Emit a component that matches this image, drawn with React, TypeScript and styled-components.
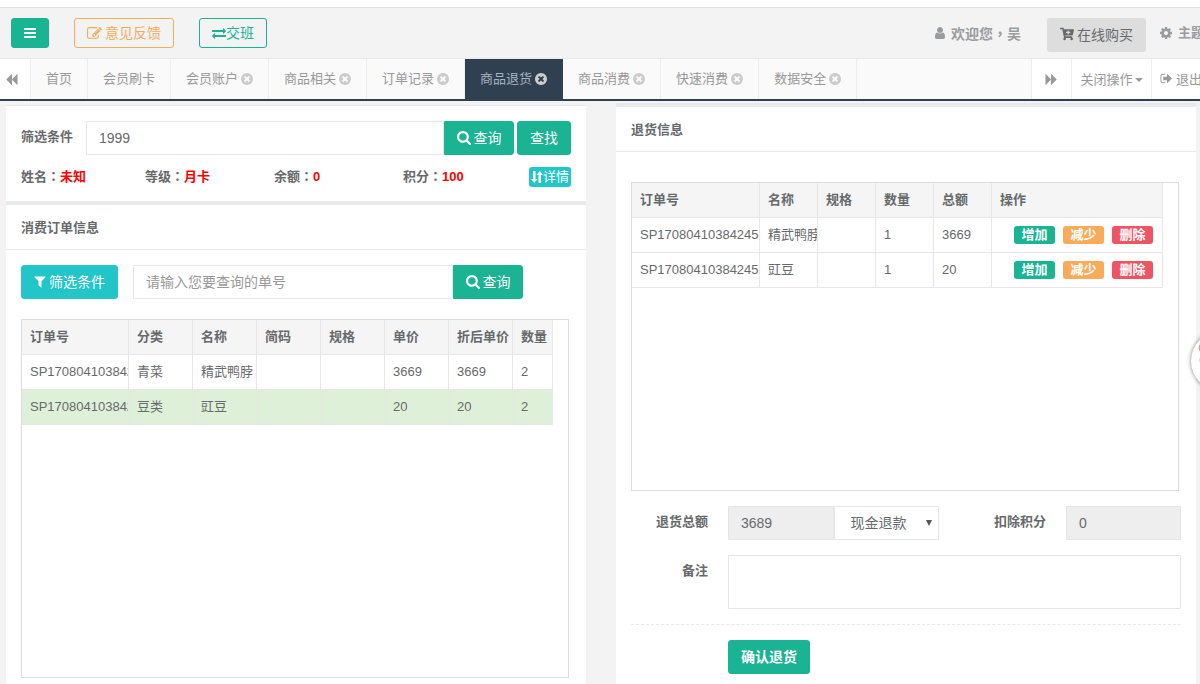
import React from "react";
import styled, { createGlobalStyle, css } from "styled-components";
import { FaCartPlus } from "react-icons/fa";

const GlobalStyle = createGlobalStyle`
  *, *::before, *::after { box-sizing: border-box; }
  body {
    margin: 0;
    background: #f3f3f4;
    color: #676a6c;
    font-family: "Liberation Sans", "Noto Sans CJK SC", sans-serif;
    font-size: 13px;
    line-height: 20px;
  }
  button, input, select, textarea { font-family: inherit; color: inherit; margin: 0; }
  a { color: inherit; text-decoration: none; }
`;

const paths = {
  bars: "M1664 1344v128q0 26-19 45t-45 19h-1408q-26 0-45-19t-19-45v-128q0-26 19-45t45-19h1408q26 0 45 19t19 45zm0-512v128q0 26-19 45t-45 19h-1408q-26 0-45-19t-19-45v-128q0-26 19-45t45-19h1408q26 0 45 19t19 45zm0-512v128q0 26-19 45t-45 19h-1408q-26 0-45-19t-19-45v-128q0-26 19-45t45-19h1408q26 0 45 19t19 45z",
  exchange: "M1792 1184v192q0 13-9.5 22.5t-22.5 9.5h-1376v192q0 13-9.5 22.5t-22.5 9.5q-12 0-24-10l-319-320q-9-9-9-22 0-14 9-23l320-320q9-9 23-9 13 0 22.5 9.5t9.5 22.5v192h1376q13 0 22.5 9.5t9.5 22.5zm0-544q0 14-9 23l-320 320q-9 9-23 9-13 0-22.5-9.5t-9.5-22.5v-192h-1376q-13 0-22.5-9.5t-9.5-22.5v-192q0-13 9.5-22.5t22.5-9.5h1376v-192q0-14 9-23t23-9q12 0 24 10l319 319q9 9 9 23z",
  edit: "M888 1184l116-116-152-152-116 116v56h96v96h56zm440-720q-16-16-33 1l-350 350q-17 17-1 33t33-1l350-350q17-17 1-33zm80 594v190q0 119-84.5 203.5t-203.5 84.5h-832q-119 0-203.5-84.5t-84.5-203.5v-832q0-119 84.5-203.5t203.5-84.5h832q63 0 117 25 15 7 18 23 3 17-9 29l-49 49q-14 14-32 8-23-6-45-6h-832q-66 0-113 47t-47 113v832q0 66 47 113t113 47h832q66 0 113-47t47-113v-126q0-13 9-22l64-64q15-15 35-7t20 29zm-96-738l288 288-672 672h-288v-288zm444 132l-92 92-288-288 92-92q28-28 68-28t68 28l152 152q28 28 28 68t-28 68z",
  search: "M1216 832q0-185-131.5-316.5t-316.5-131.5-316.5 131.5-131.5 316.5 131.5 316.5 316.5 131.5 316.5-131.5 131.5-316.5zm512 832q0 52-38 90t-90 38q-54 0-90-38l-343-342q-179 124-399 124-143 0-273.5-55.5t-225-150-150-225-55.5-273.5 55.5-273.5 150-225 225-150 273.5-55.5 273.5 55.5 225 150 150 225 55.5 273.5q0 220-124 399l343 343q37 37 37 90z",
  close: "M1277 1122q0-26-19-45l-181-181 181-181q19-19 19-45 0-27-19-46l-90-90q-19-19-46-19-26 0-45 19l-181 181-181-181q-19-19-45-19-27 0-46 19l-90 90q-19 19-19 46 0 26 19 45l181 181-181 181q-19 19-19 45 0 27 19 46l90 90q19 19 46 19 26 0 45-19l181-181 181 181q19 19 45 19 27 0 46-19l90-90q19-19 19-46zm387-226q0 209-103 385.5t-279.5 279.5-385.5 103-385.5-103-279.5-279.5-103-385.5 103-385.5 279.5-279.5 385.5-103 385.5 103 279.5 279.5 103 385.5z",
  filter: "M1595 295q17 41-14 70l-493 493v742q0 42-39 59-13 5-25 5-27 0-45-19l-256-256q-19-19-19-45v-486l-493-493q-31-29-14-70 17-39 59-39h1280q42 0 59 39z",
  forward: "M45 1651q-19 19-32 13t-13-32v-1472q0-26 13-32t32 13l710 710q8 8 13 19v-710q0-26 13-32t32 13l710 710q19 19 19 45t-19 45l-710 710q-19 19-32 13t-13-32v-710q-5 10-13 19z",
  signOut: "M704 1440q0 4 1 20t.5 26.5-3 23.5-10 19.5-20.5 6.5h-320q-119 0-203.5-84.5t-84.5-203.5v-704q0-119 84.5-203.5t203.5-84.5h320q13 0 22.5 9.5t9.5 22.5q0 4 1 20t.5 26.5-3 23.5-10 19.5-20.5 6.5h-320q-66 0-113 47t-47 113v704q0 66 47 113t113 47h312l11.500 1 11.500 3 8 5.500 7 9 2 13.500zm928-544q0 26-19 45l-544 544q-19 19-45 19t-45-19-19-45v-288h-448q-26 0-45-19t-19-45v-384q0-26 19-45t45-19h448v-288q0-26 19-45t45-19 45 19l544 544q19 19 19 45z",
  user: "M1536 1399q0 109-62.5 187t-150.5 78h-854q-88 0-150.5-78t-62.5-187q0-85 8.5-160.5t31.5-152 58.5-131 94-89 134.5-34.5q131 128 313 128t313-128q76 0 134.5 34.5t94 89 58.5 131 31.5 152 8.5 160.5zm-256-887q0 159-112.5 271.5t-271.5 112.5-271.5-112.5-112.5-271.5 112.5-271.5 271.5-112.5 271.5 112.5 112.5 271.5z",
  cog: "M1152 896q0-106-75-181t-181-75-181 75-75 181 75 181 181 75 181-75 75-181zm512-109v222q0 12-8 23t-20 13l-185 28q-19 54-39 91 35 50 107 138 10 12 10 25t-9 23q-27 37-99 108t-94 71q-12 0-26-9l-138-108q-44 23-91 38-16 136-29 186-7 28-36 28h-222q-14 0-24.5-8.5t-11.5-21.5l-28-184q-49-16-90-37l-141 107q-10 9-25 9-14 0-25-11-126-114-165-168-7-10-7-23 0-12 8-23 15-21 51-66.5t54-70.5q-27-50-41-99l-183-27q-13-2-21-12.5t-8-23.5v-222q0-12 8-23t19-13l186-28q14-46 39-92-40-57-107-138-10-12-10-24 0-10 9-23 26-36 98.5-107.5t94.5-71.5q13 0 26 10l138 107q44-23 91-38 16-136 29-186 7-28 36-28h222q14 0 24.5 8.5t11.5 21.5l28 184q49 16 90 37l142-107q9-9 24-9 13 0 25 10 129 119 165 170 7 8 7 22 0 12-8 23-15 21-51 66.5t-54 70.5q26 50 41 98l183 28q13 2 21 12.5t8 23.5z",
};

const Svg = styled.svg<{ $turn?: number }>`
  display: block;
  flex: none;
  fill: currentColor;
  ${(p) => p.$turn && css`transform: rotate(${p.$turn}deg);`}
`;

type IconProps = { name: keyof typeof paths; size?: number; turn?: number; box?: string };
const Icon = ({ name, size = 14, turn, box = "0 0 1792 1792" }: IconProps) => (
  <Svg viewBox={box} width={size} height={size} $turn={turn} aria-hidden="true">
    <path d={paths[name]} />
  </Svg>
);

const colors = { primary: "#1ab394", info: "#23c6c8", warning: "#f8ac59", danger: "#ed5565", line: "#e7e7e7" };
type Tone = "primary" | "info" | "warning" | "danger";

const Header = styled.header`
  display: flex;
  justify-content: space-between;
  align-items: flex-start;
  height: 52px;
  margin-top: 7px;
  padding: 10px 0 0 11px;
  border-top: 1px solid #dfe0e1;
  border-bottom: 1px solid #e7e7e7;
  white-space: nowrap;
`;

const TopStrip = styled.div`
  display: flow-root;
  background: linear-gradient(#fff 7px, #f3f3f4 7px);
  overflow: hidden;
`;

const HeaderGroup = styled.div<{ $gap: number }>`
  display: flex;
  align-items: flex-start;
  gap: ${(p) => p.$gap}px;
`;

const Button = styled.button<{ $tone: Tone; $outline?: boolean; $joined?: boolean; $height?: number; $bold?: boolean }>`
  display: inline-flex;
  flex: none;
  align-items: center;
  justify-content: center;
  gap: 3px;
  height: ${(p) => p.$height ?? 34}px;
  padding: 0 12px;
  border: 1px solid ${(p) => colors[p.$tone]};
  border-radius: ${(p) => (p.$joined ? "0 3px 3px 0" : "3px")};
  background: ${(p) => (p.$outline ? "transparent" : colors[p.$tone])};
  color: ${(p) => (p.$outline ? colors[p.$tone] : "#fff")};
  font-size: 14px;
  font-weight: ${(p) => (p.$bold ? 700 : 400)};
  line-height: 20px;
  white-space: nowrap;
`;

const SearchButton = styled(Button)`
  width: 70px;
  padding: 0;
`;

const ExchangeButton = styled(Button)`
  gap: 0;
`;

const Welcome = styled.span`
  display: flex;
  align-items: center;
  gap: 4px;
  height: 30px;
  color: #999c9e;
  font-size: 14px;
  font-weight: 700;
`;

const BuyButton = styled.button`
  display: flex;
  align-items: center;
  gap: 3px;
  height: 34px;
  padding: 0 13px 2px;
  border: 0;
  border-radius: 3px;
  background: #ddd;
  font-size: 14px;
`;

const ThemeLink = styled.a`
  display: flex;
  align-items: center;
  gap: 5px;
  width: 41px;
  height: 30px;
  overflow: hidden;
  color: #999c9e;
  font-weight: 700;
`;

const TabBar = styled.nav`
  display: flex;
  height: 42px;
  border-bottom: 2px solid #2f4050;
  background: #fafafa;
  color: #999;
  overflow: hidden;
`;

const Tab = styled.a<{ $active?: boolean }>`
  display: flex;
  flex: none;
  align-items: center;
  gap: 3px;
  height: 40px;
  padding: 0 15px;
  border-right: 1px solid ${(p) => (p.$active ? "#2f4050" : "#eee")};
  background: ${(p) => (p.$active ? "#2f4050" : "transparent")};
  color: ${(p) => (p.$active ? "#a7b1c2" : "#999")};
  svg { color: #ccc; }
`;

const TabList = styled.div`
  display: flex;
  flex: 1;
  min-width: 0;
  overflow: hidden;
`;

const TabControl = styled.button<{ $width: number; $edge: "left" | "right" }>`
  display: flex;
  flex: none;
  align-items: center;
  justify-content: center;
  width: ${(p) => p.$width}px;
  height: 40px;
  padding: 0;
  border: 0 solid #eee;
  border-${(p) => p.$edge}-width: 1px;
  background: #fff;
  color: #999;
  font-size: 13px;
  white-space: nowrap;
`;

const BackControl = styled(TabControl)`
  justify-content: flex-start;
  padding-left: 5px;
`;

const MenuControl = styled(TabControl)`
  gap: 2px;
  padding-bottom: 2px;
`;

const ExitControl = styled(TabControl)`
  justify-content: flex-start;
  gap: 3px;
  padding: 0 0 2px 8px;
  overflow: hidden;
`;

const Caret = styled.span`
  margin-top: 4px;
  border: 4px solid transparent;
  border-top-color: currentColor;
  border-bottom: 0;
`;

const Main = styled.main`
  display: grid;
  grid-template-columns: minmax(0, 1fr) minmax(0, 1fr);
  gap: 30px;
  padding: 2px 4px 0 6px;
`;

const Column = styled.div<{ $offset?: number }>`
  display: flex;
  flex-direction: column;
  padding-top: ${(p) => p.$offset ?? 0}px;
`;

const Panel = styled.section<{ $edge: number; $fill?: boolean }>`
  border-top: ${(p) => p.$edge}px solid #e7eaec;
  background: #fff;
  ${(p) => p.$fill && css`flex: 1;`}
`;

const PanelTitle = styled.h2`
  height: 45px;
  margin: 0;
  padding: 13px 15px 11px;
  border-bottom: 1px solid #e7eaec;
  font-size: 13px;
  font-weight: 700;
  line-height: 20px;
`;

const PanelBody = styled.div<{ $top?: number; $bottom?: number }>`
  padding: ${(p) => p.$top ?? 15}px 15px ${(p) => p.$bottom ?? 15}px;
`;

const SearchRow = styled.form`
  display: flex;
  align-items: center;
`;

const FieldLabel = styled.label`
  height: 34px;
  margin-right: 13px;
  padding-top: 6px;
  font-weight: 700;
`;

const Input = styled.input`
  flex: 1;
  width: 100%;
  min-width: 0;
  height: 34px;
  padding: 6px 12px;
  border: 1px solid #e5e6e7;
  border-radius: 1px;
  background: #fff;
  font-size: 14px;
  &::placeholder { color: #999; opacity: 1; }
  &:read-only { background: #eee; }
`;

const FindButton = styled(Button)`
  margin-left: 3px;
`;

const OrderSearch = styled(SearchRow)`
  max-width: 502px;
  margin-bottom: 20px;
  ${Input} { margin-left: 15px; }
`;

const Summary = styled.div`
  display: grid;
  grid-template-columns: 124fr 129fr 129fr 126fr 42px;
  align-items: center;
  height: 20px;
  margin: 11px 0 0;
  font-weight: 700;
`;

const Value = styled.span`
  color: #f00;
`;

/* Traditional-style punctuation sits in the middle of its cell. */
const Mark = styled.span`
  font-family: "Noto Sans CJK TC", sans-serif;
`;

const DetailButton = styled.button`
  display: flex;
  align-items: center;
  justify-content: center;
  height: 20px;
  padding: 0;
  border: 0;
  border-radius: 3px;
  background: #23c6c8;
  color: #fff;
  font-size: 13px;
  line-height: 20px;
`;

const TableFrame = styled.div<{ $height: number }>`
  height: ${(p) => p.$height}px;
  margin-right: 2px;
  border: 1px solid #ddd;
  overflow: hidden;
`;

const Table = styled.table`
  width: 531px;
  table-layout: fixed;
  border-collapse: separate;
  border-spacing: 0;
`;

const cell = css`
  height: 35px;
  padding: 0 0 0 8px;
  border-right: 1px solid ${colors.line};
  border-bottom: 1px solid ${colors.line};
  overflow: hidden;
  text-align: left;
  white-space: nowrap;
`;

const Th = styled.th`
  ${cell}
  background: #f5f5f6;
`;

const Td = styled.td`
  ${cell}
`;

const Row = styled.tr<{ $selected?: boolean }>`
  background: ${(p) => (p.$selected ? "#dff0d8" : "transparent")};
`;

const Actions = styled.div`
  display: flex;
  justify-content: flex-end;
  gap: 8px;
  padding-right: 9px;
`;

const Badge = styled.button<{ $tone: Tone }>`
  width: 41px;
  height: 18px;
  padding: 0;
  border: 0;
  border-radius: 3px;
  background: ${(p) => colors[p.$tone]};
  color: #fff;
  font-size: 13px;
  font-weight: 700;
  line-height: 18px;
`;

const RefundForm = styled.form`
  display: grid;
  grid-template-columns: 77px minmax(0, 211fr) 87px minmax(0, 115fr);
  column-gap: 20px;
  row-gap: 15px;
  margin-top: 15px;
`;

const FormLabel = styled.label`
  padding-top: 6px;
  font-weight: 700;
  text-align: right;
`;

const AmountGroup = styled.div`
  display: grid;
  grid-template-columns: minmax(0, 1fr) minmax(0, 1fr);
`;

const SelectBox = styled.div`
  position: relative;
`;

const Select = styled.select`
  width: 100%;
  height: 34px;
  padding: 0 16px;
  appearance: none;
  border: 1px solid #e5e6e7;
  border-radius: 1px;
  background: #fff;
  font-size: 14px;
`;

const SelectArrow = styled.span`
  position: absolute;
  top: 14px;
  right: 7px;
  border: 3px solid transparent;
  border-top: 6px solid #555;
  border-bottom: 0;
  pointer-events: none;
`;

const Textarea = styled.textarea`
  display: block;
  grid-column: 2 / -1;
  width: 100%;
  height: 54px;
  padding: 6px 12px;
  border: 1px solid #e5e6e7;
  border-radius: 1px;
  resize: none;
  font-size: 14px;
`;

const Divider = styled.hr`
  grid-column: 1 / -1;
  width: 100%;
  margin: 0;
  border: 0;
  border-top: 1px dashed #e7eaec;
`;

const Submit = styled(Button)`
  grid-column: 2;
  justify-self: start;
`;

const FloatingBall = styled.button`
  position: fixed;
  top: 331px;
  right: -51px;
  width: 60px;
  height: 60px;
  padding: 0;
  border: 0;
  border-radius: 50%;
  background: #fff;
  box-shadow: 0 0 4px rgba(0, 0, 0, 0.5);
`;

const tabs = ["首页", "会员刷卡", "会员账户", "商品相关", "订单记录", "商品退货", "商品消费", "快速消费", "数据安全"];
const summary = [
  ["姓名", "未知"],
  ["等级", "月卡"],
  ["余额", "0"],
  ["积分", "100"],
];
const orderHeads = ["订单号", "分类", "名称", "简码", "规格", "单价", "折后单价", "数量"];
const orderWidths = [107, 64, 64, 64, 64, 64, 64, 40];
const orders = [
  ["SP170804103842456", "青菜", "精武鸭脖", "", "", "3669", "3669", "2"],
  ["SP170804103842456", "豆类", "豇豆", "", "", "20", "20", "2"],
];
const refundHeads = ["订单号", "名称", "规格", "数量", "总额", "操作"];
const refundWidths = [128, 58, 58, 58, 58, 171];
const refunds = [
  ["SP170804103842456", "精武鸭脖", "", "1", "3669"],
  ["SP170804103842456", "豇豆", "", "1", "20"],
];

const TableHead = ({ heads, widths }: { heads: string[]; widths: number[] }) => (
  <>
    <colgroup>
      {widths.map((w, i) => (
        <col key={i} width={w} />
      ))}
    </colgroup>
    <thead>
      <tr>
        {heads.map((h) => (
          <Th key={h}>{h}</Th>
        ))}
      </tr>
    </thead>
  </>
);

export default function App() {
  return (
    <>
      <GlobalStyle />
      <TopStrip>
        <Header>
          <HeaderGroup $gap={25}>
            <Button $tone="primary" $height={30} aria-label="菜单">
              <Icon name="bars" size={12} box="128 128 1536 1536" />
            </Button>
            <Button $tone="warning" $outline $height={30}>
              <Icon name="edit" size={15} />
              意见反馈
            </Button>
            <ExchangeButton $tone="primary" $outline $height={30}>
              <Icon name="exchange" />
              交班
            </ExchangeButton>
          </HeaderGroup>
          <HeaderGroup $gap={13}>
            <HeaderGroup $gap={26}>
              <Welcome>
                <Icon name="user" />
                <span>欢迎您<Mark>，</Mark>吴</span>
              </Welcome>
              <BuyButton>
                <FaCartPlus size={14} />
                在线购买
              </BuyButton>
            </HeaderGroup>
            <ThemeLink href="#theme">
              <Icon name="cog" />
              主题
            </ThemeLink>
          </HeaderGroup>
        </Header>
      </TopStrip>

      <TabBar>
        <BackControl $width={31} $edge="right" aria-label="向左">
          <Icon name="forward" size={13} turn={180} box="0 0 1664 1792" />
        </BackControl>
        <TabList>
          {tabs.map((t, i) => (
            <Tab key={t} href="#tab" $active={t === "商品退货"}>
              {t}
              {i > 1 && <Icon name="close" size={12} box="128 128 1536 1536" />}
            </Tab>
          ))}
        </TabList>
        <TabControl $width={40} $edge="left" aria-label="向右">
          <Icon name="forward" size={13} box="0 0 1664 1792" />
        </TabControl>
        <MenuControl $width={80} $edge="left">
          关闭操作
          <Caret />
        </MenuControl>
        <ExitControl $width={49} $edge="left">
          <Icon name="signOut" size={13} />
          退出
        </ExitControl>
      </TabBar>

      <Main>
        <Column $offset={2}>
          <Panel $edge={1}>
            <PanelBody>
              <SearchRow>
                <FieldLabel htmlFor="member">筛选条件</FieldLabel>
                <Input id="member" defaultValue="1999" />
                <SearchButton type="button" $tone="primary" $joined>
                  <Icon name="search" box="64 128 1664 1664" />
                  查询
                </SearchButton>
                <FindButton type="button" $tone="primary">查找</FindButton>
              </SearchRow>
              <Summary>
                {summary.map(([name, value]) => (
                  <span key={name}>
                    {name}
                    <Mark>：</Mark>
                    <Value>{value}</Value>
                  </span>
                ))}
                <DetailButton>
                  <Svg viewBox="0 0 12 12" width={12} height={12} aria-hidden="true">
                    <path d="M2 0h2.500v8h2L3.250 12 0 8h2zM7.500 12H10V4h2L8.750 0 5.500 4h2z" />
                  </Svg>
                  详情
                </DetailButton>
              </Summary>
            </PanelBody>
          </Panel>
          <Panel $edge={4} $fill>
            <PanelTitle>消费订单信息</PanelTitle>
            <PanelBody $bottom={6}>
              <OrderSearch>
                <Button type="button" $tone="info">
                  <Icon name="filter" size={12} box="128 192 1536 1536" />
                  筛选条件
                </Button>
                <Input aria-label="单号" placeholder="请输入您要查询的单号" />
                <SearchButton type="button" $tone="primary" $joined>
                  <Icon name="search" box="64 128 1664 1664" />
                  查询
                </SearchButton>
              </OrderSearch>
              <TableFrame $height={359}>
                <Table>
                  <TableHead heads={orderHeads} widths={orderWidths} />
                  <tbody>
                    {orders.map((row, r) => (
                      <Row key={r} $selected={r === 1}>
                        {row.map((c, i) => (
                          <Td key={i}>{c}</Td>
                        ))}
                      </Row>
                    ))}
                  </tbody>
                </Table>
              </TableFrame>
            </PanelBody>
          </Panel>
        </Column>

        <Column>
          <Panel $edge={4} $fill>
            <PanelTitle>退货信息</PanelTitle>
            <PanelBody $top={30} $bottom={10}>
              <TableFrame $height={309}>
                <Table>
                  <TableHead heads={refundHeads} widths={refundWidths} />
                  <tbody>
                    {refunds.map((row, r) => (
                      <Row key={r}>
                        {row.map((c, i) => (
                          <Td key={i}>{c}</Td>
                        ))}
                        <Td>
                          <Actions>
                            <Badge $tone="primary">增加</Badge>
                            <Badge $tone="warning">减少</Badge>
                            <Badge $tone="danger">删除</Badge>
                          </Actions>
                        </Td>
                      </Row>
                    ))}
                  </tbody>
                </Table>
              </TableFrame>
              <RefundForm>
                <FormLabel htmlFor="total">退货总额</FormLabel>
                <AmountGroup>
                  <Input id="total" readOnly value="3689" />
                  <SelectBox>
                    <Select aria-label="退款方式" defaultValue="cash">
                      <option value="cash">现金退款</option>
                    </Select>
                    <SelectArrow />
                  </SelectBox>
                </AmountGroup>
                <FormLabel htmlFor="points">扣除积分</FormLabel>
                <Input id="points" readOnly value="0" />
                <FormLabel htmlFor="note">备注</FormLabel>
                <Textarea id="note" />
                <Divider />
                <Submit type="button" $tone="primary" $bold>确认退货</Submit>
              </RefundForm>
            </PanelBody>
          </Panel>
        </Column>
      </Main>

      <FloatingBall aria-label="助手">
        <Svg viewBox="0 0 60 60" width={60} height={60} aria-hidden="true">
          <path d="M8 14q-1 4 1 7l8-3-2-8z" fill="#e8a070" />
          <circle cx="13" cy="29" r="5" fill="#d8dde0" />
        </Svg>
      </FloatingBall>
    </>
  );
}
